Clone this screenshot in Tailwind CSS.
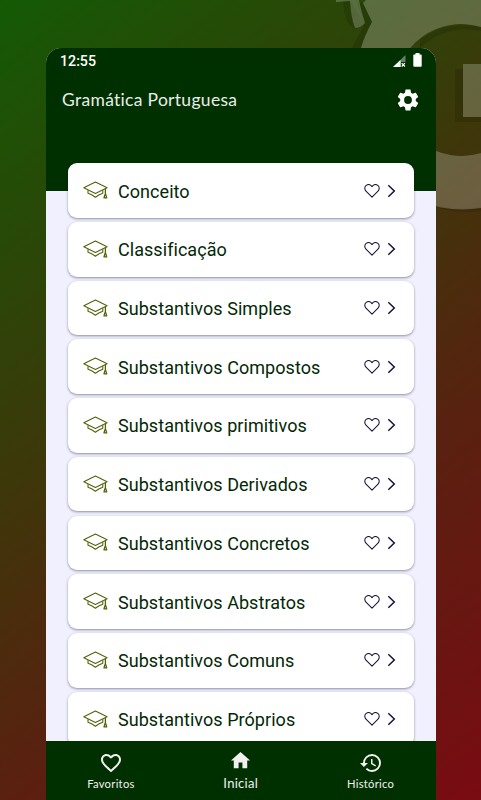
<!DOCTYPE html>
<html lang="pt">
<head>
<meta charset="utf-8">
<title>Gramática Portuguesa</title>
<script src="https://cdn.jsdelivr.net/npm/@tailwindcss/browser@4"></script>
</head>
<body class="relative h-[800px] w-[481px] overflow-hidden bg-linear-[142deg,#145a05_0%,#3c380a_41%,#5a2010_68%,#790b12_100%] font-['Roboto',sans-serif]">
<svg class="absolute top-0 left-0" width="481" height="230" viewBox="0 0 481 230" aria-hidden="true">
  <g fill="#000" fill-opacity=".12">
    <path d="M356 0 363 3 372 22Q364 37 361 48H352Q357 36 365 24L357 5z"/>
    <path d="M343 0Q344 26 356 29L366 25 350 0z"/>
    <path d="M455 69H463V117H481V122H455z"/>
    <path d="M430 206Q455 214 481 211V207Q455 211 430 204z"/>
    <path d="M420 40Q445 20 481 27V31Q445 24 420 48z"/>
  </g>
  <path fill="#fff" fill-opacity=".22" fill-rule="evenodd" d="M363 3 366 0H481V208A119 119 0 0 1 352 134V70Q355 58 361 48 364 37 372 22zM481 27A66 66 0 1 0 481 153z"/>
  <path fill="#fff" fill-opacity=".22" d="M336 0H359Q361 10 365 23 Q361 28 355 28 351 18 350 1L336 2zM463 64H481V117H463z"/>
</svg>
<main class="relative ml-[46px] flex h-[752px] mt-12 w-[389.5px] flex-col overflow-hidden rounded-t-[15px] bg-[#f1f0ff]">
  <header class="h-[142.5px] shrink-0 bg-[#003000] text-white">
    <div class="flex h-[25px] items-center justify-between pr-[14px] pl-[14px]">
      <span class="pt-[2px] text-[14.2px] leading-none font-medium">12:55</span>
      <span class="flex items-center gap-[7px]">
        <svg width="13" height="12" viewBox="0 0 13 12"><path d="M12.5 0V7H8V12H0z" fill="#fff" fill-opacity=".4"/><path d="M0 12 7.5 5V12z" fill="#fff"/><path d="m8.7 8.2 3.2 3.3m0-3.3-3.2 3.3" stroke="#fff" stroke-width="1.2"/></svg>
        <svg class="relative -top-px" width="9" height="14" viewBox="0 0 9 14"><path d="M2.5 0h4v1.4H8q.7 0 .7.8v10.6q0 .9-.8.9H1.1q-.8 0-.8-.9V2.2q0-.8.7-.8h1.5z" fill="#fff"/></svg>
      </span>
    </div>
    <div class="flex h-[53px] items-center justify-between pr-[15px] pl-4">
      <h1 class="pt-px font-['Lato',sans-serif] text-[17.5px] tracking-[0.3px] text-[#e8eee8]">Gramática Portuguesa</h1>
      <svg width="26" height="26" viewBox="0 0 24 24" fill="#fff"><path d="M19.14 12.94c.04-.3.06-.61.06-.94 0-.32-.02-.64-.07-.94l2.03-1.58c.18-.14.23-.41.12-.61l-1.92-3.32c-.12-.22-.37-.29-.59-.22l-2.39.96c-.5-.38-1.03-.7-1.62-.94L14.4 2.81c-.04-.24-.24-.41-.48-.41h-3.84c-.24 0-.43.17-.47.41L9.25 5.35C8.66 5.59 8.12 5.92 7.63 6.29L5.24 5.33c-.22-.08-.47 0-.59.22L2.74 8.87c-.12.21-.08.47.12.61l2.03 1.58c-.05.3-.09.63-.09.94s.02.64.07.94l-2.03 1.58c-.18.14-.23.41-.12.61l1.92 3.32c.12.22.37.29.59.22l2.39-.96c.5.38 1.03.7 1.62.94l.36 2.54c.05.24.24.41.48.41h3.84c.24 0 .44-.17.47-.41l.36-2.54c.59-.24 1.13-.56 1.62-.94l2.39.96c.22.08.47 0 .59-.22l1.92-3.32c.12-.22.07-.47-.12-.61zM12 15.6A3.6 3.6 0 1 1 12 8.4a3.6 3.6 0 0 1 0 7.2z"/></svg>
    </div>
  </header>
  <ul id="topics" class="-mt-[27.2px] flex min-h-0 flex-1 flex-col gap-[4.23px] overflow-hidden px-[22px]"></ul>
  <nav class="grid h-[59px] shrink-0 grid-cols-3 bg-[#003000] font-['Lato',sans-serif] text-[#f0f0f0]">
    <a class="flex flex-col items-center pt-[9.5px]">
      <svg width="24" height="24" viewBox="0 0 24 24" fill="currentColor"><path d="M16.5 3c-1.74 0-3.41.81-4.5 2.09C10.91 3.81 9.24 3 7.5 3 4.42 3 2 5.42 2 8.5c0 3.78 3.4 6.86 8.55 11.54L12 21.35l1.45-1.32C18.6 15.36 22 12.28 22 8.5 22 5.42 19.58 3 16.5 3zm-4.4 15.55-.1.1-.1-.1C7.14 14.24 4 11.39 4 8.5 4 6.5 5.5 5 7.5 5c1.54 0 3.04.99 3.57 2.36h1.87C13.46 5.99 14.96 5 16.5 5c2 0 3.5 1.5 3.5 3.5 0 2.89-3.14 5.74-7.9 10.05z"/></svg>
      <span class="mt-[2.5px] text-[11.2px] leading-[13px] tracking-[0.3px]">Favoritos</span>
    </a>
    <a class="flex flex-col items-center pt-[8px]">
      <svg width="23" height="23" viewBox="0 0 24 24" fill="currentColor"><path d="M10 20v-6h4v6h5v-8h3L12 3 2 12h3v8z"/></svg>
      <span class="mt-[3.5px] text-[13px] leading-[15px] tracking-[0.3px]">Inicial</span>
    </a>
    <a class="flex flex-col items-center pt-[9.5px]">
      <svg width="24" height="24" viewBox="0 0 24 24" fill="currentColor"><path d="M13 3a9 9 0 0 0-9 9H1l3.89 3.89.07.14L9 12H6c0-3.87 3.13-7 7-7s7 3.13 7 7-3.13 7-7 7c-1.93 0-3.68-.79-4.94-2.06l-1.42 1.42A8.954 8.954 0 0 0 13 21a9 9 0 0 0 0-18zm-1 5v5l4.28 2.54.72-1.21-3.5-2.08V8z"/></svg>
      <span class="mt-[2.5px] text-[11.2px] leading-[13px] tracking-[0.3px]">Histórico</span>
    </a>
  </nav>
</main>
<template id="row">
  <li class="flex h-[54.5px] shrink-0 items-center rounded-[9px] bg-white pr-[17px] pl-[15px] shadow-[0_1px_2.5px_rgba(20,20,50,0.45)]">
    <svg class="shrink-0" width="25" height="19" viewBox="0 0 25 19" fill="none" stroke="#53620a" stroke-width="1.1" stroke-linejoin="round"><path d="M.8 6.8 12.4 1.1 24.1 6.8 12.4 12.4z"/><path d="M5 9.2V12.2Q8.5 13.3 12.4 16.2 16.3 13.3 19.8 12.2V9.2"/><path d="M22.4 7.8v6M21.9 13.6l-.9 3.3h2.7l-.9-3.3z" stroke-width="1.3"/></svg>
    <span class="ml-[10px] flex-1 pt-[2px] text-[18px] leading-[22px] tracking-[0.05px] whitespace-nowrap text-[#032806]"></span>
    <svg class="shrink-0" width="16" height="14" viewBox="0 0 16 14" fill="none" stroke="#17123a" stroke-width="1.05" stroke-linejoin="round"><path d="M8 13.2 2 7.2C.2 5.4.5 2.6 2.2 1.4 4.2.1 6.6.6 8 2.6 9.4.6 11.8.1 13.8 1.4 15.5 2.6 15.8 5.4 14 7.2z"/></svg>
    <svg class="ml-[7px] shrink-0" width="10" height="14" viewBox="0 0 10 14" fill="none" stroke="#17123a" stroke-width="1.5"><path d="M1.3 1.2 7.3 7 1.3 12.8"/></svg>
  </li>
</template>
<script>
const names = ['Conceito','Classificação','Substantivos Simples','Substantivos Compostos','Substantivos primitivos','Substantivos Derivados','Substantivos Concretos','Substantivos Abstratos','Substantivos Comuns','Substantivos Próprios'];
const list = document.getElementById('topics'), row = document.getElementById('row');
for (const name of names) {
  const item = row.content.cloneNode(true);
  item.querySelector('span').textContent = name;
  list.append(item);
}
</script>
</body>
</html>
